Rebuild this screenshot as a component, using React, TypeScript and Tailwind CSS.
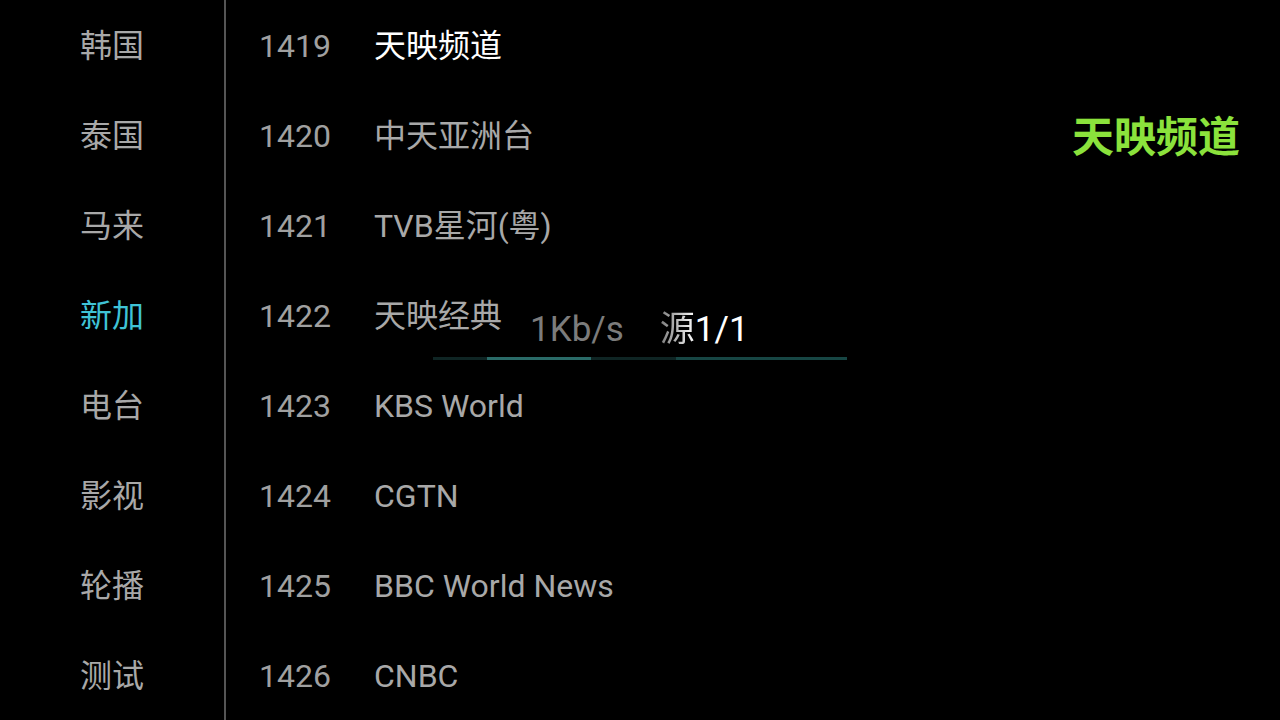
import React from 'react';

const groups = ['韩国', '泰国', '马来', '新加', '电台', '影视', '轮播', '测试'];
const activeGroup = '新加';

const channels = [
  { num: '1419', name: '天映频道' },
  { num: '1420', name: '中天亚洲台' },
  { num: '1421', name: 'TVB星河(粤)' },
  { num: '1422', name: '天映经典' },
  { num: '1423', name: 'KBS World' },
  { num: '1424', name: 'CGTN' },
  { num: '1425', name: 'BBC World News' },
  { num: '1426', name: 'CNBC' },
];
const activeChannel = '1419';

const font = "font-['Roboto','Noto_Sans_CJK_SC',sans-serif]";

const App = () => {
  return (
    <div className={`relative flex h-[720px] w-[1280px] overflow-hidden bg-black ${font}`}>
      {/* 分组 */}
      <div className="flex w-[226px] flex-col border-r-2 border-[#555555]">
        {groups.map((g) => (
          <div
            key={g}
            className={
              'flex h-[90px] items-center justify-center pt-[1px] text-[32px] ' +
              (g === activeGroup ? 'text-[#3fc3d6]' : 'text-[#a8a8a8]')
            }
          >
            {g}
          </div>
        ))}
      </div>

      {/* 频道 */}
      <div className="flex flex-1 flex-col">
        {channels.map((c) => (
          <div key={c.num} className="flex h-[90px] items-center pl-[33px] pt-[1px] text-[32px]">
            <span className="w-[115px] text-[#a0a0a0]">{c.num}</span>
            <span className={c.num === activeChannel ? 'text-white' : 'text-[#a8a8a8]'}>
              {c.name}
            </span>
          </div>
        ))}
      </div>

      {/* 当前频道 */}
      <div className="absolute right-[40px] top-[106px] text-[42px] font-bold text-[#8be23c]">
        天映频道
      </div>

      {/* 加载提示 */}
      <div className="absolute left-[433px] top-[306px] flex w-[414px] flex-col">
        <div className="flex items-center gap-[36px] pl-[97px] text-[35px] leading-[48px]">
          <span className="text-[#7c7c7c]">1Kb/s</span>
          <span className="text-white">
            <span className="bg-gradient-to-r from-[#7c7c7c] to-white bg-clip-text text-transparent">源</span>1/1
          </span>
        </div>
        <div className="mt-[3px] flex h-[3px] w-full">
          <div className="w-[54px] bg-[#0f2524]" />
          <div className="w-[104px] bg-[#2a6b68]" />
          <div className="w-[85px] bg-[#0f2524]" />
          <div className="w-[171px] bg-[#174644]" />
        </div>
      </div>
    </div>
  );
};

export default App;
